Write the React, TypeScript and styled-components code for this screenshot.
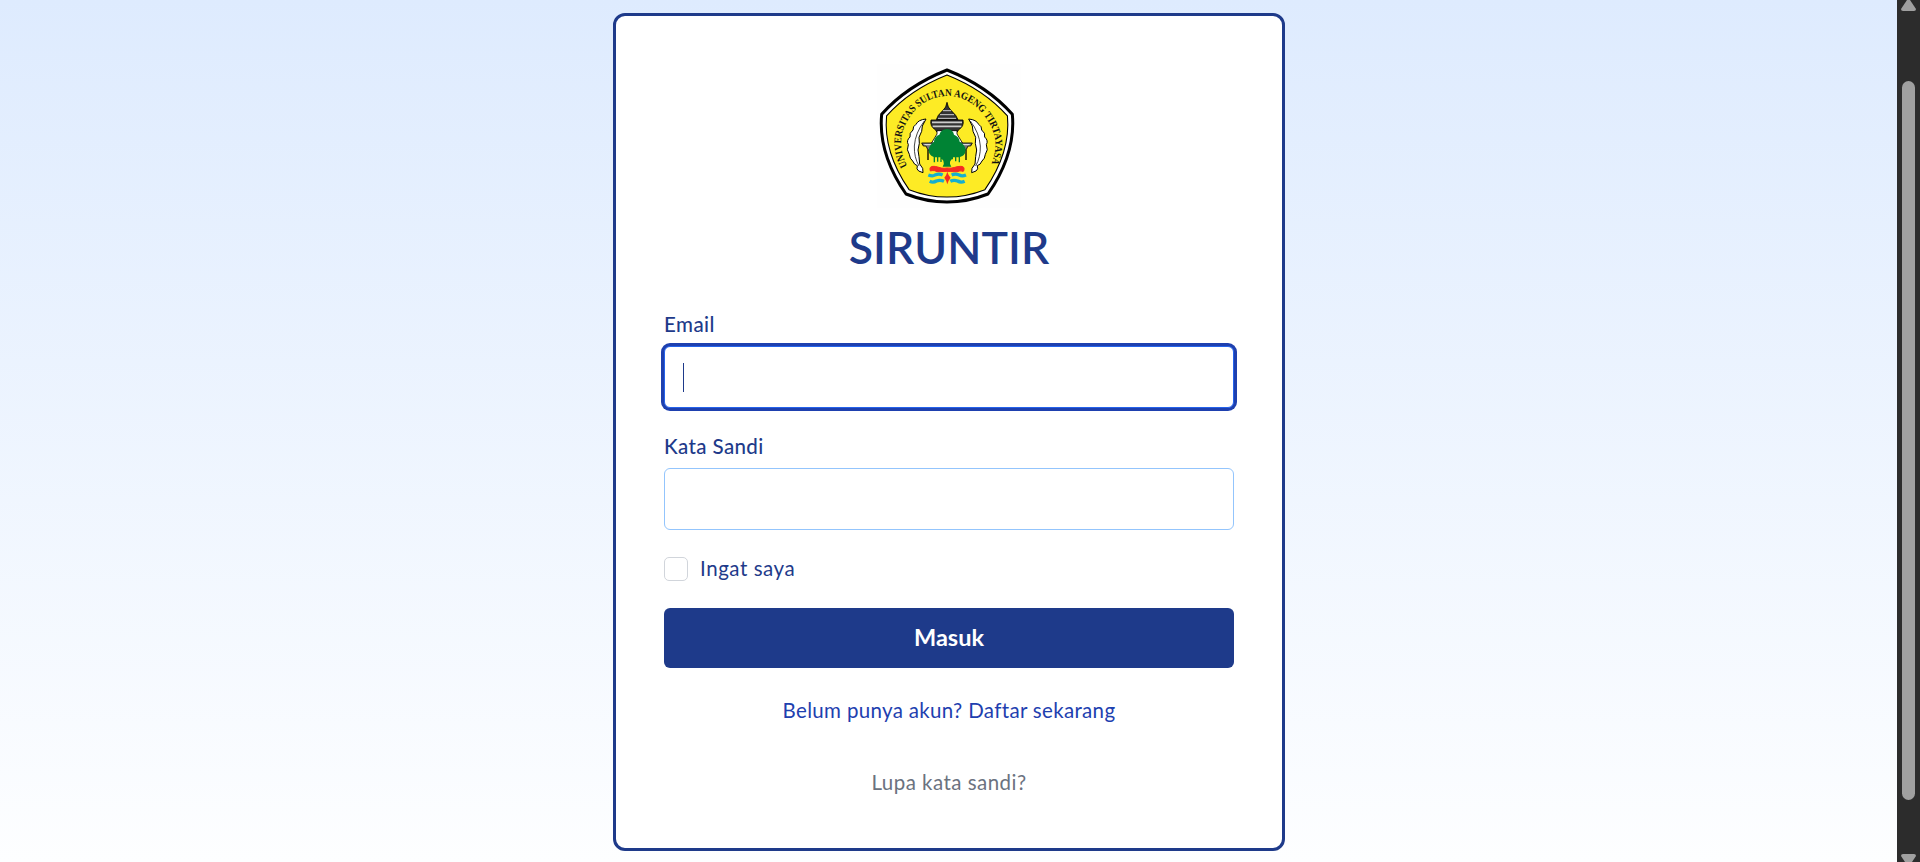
import React from 'react';
import styled, { createGlobalStyle } from 'styled-components';

const navy = '#1e3a8a';

const GlobalStyle = createGlobalStyle`
  *, *::before, *::after { box-sizing: border-box; }
  body { margin: 0; overflow: hidden; font-family: Lato, "Open Sans", sans-serif; }
`;

const Window = styled.div`
  display: flex;
  width: 100%;
  height: 862px;
  overflow: hidden;
`;

const Page = styled.main`
  flex: 1;
  display: flex;
  justify-content: center;
  align-items: flex-start;
  padding: 13px 0 0 1px;
  background: linear-gradient(to bottom, #deebfe, #fdfeff);
`;

const Card = styled.form`
  display: flex;
  flex-direction: column;
  width: 672px;
  height: 838px;
  padding: 48px;
  border: 3px solid ${navy};
  border-radius: 12px;
  background: #fff;

  > * { flex-shrink: 0; }
`;

const Emblem = styled.svg`
  display: block;
  width: 144px;
  height: 144px;
  margin-left: 213px;
`;

const Title = styled.h1`
  margin: 14px 0 0;
  height: 50px;
  line-height: 50px;
  text-align: center;
  font-size: 44.5px;
  font-weight: 600;
  letter-spacing: 0.1px;
  color: ${navy};
`;

const Field = styled.div<{ $top: number }>`
  display: flex;
  flex-direction: column;
  gap: 7px;
  margin-top: ${(p) => p.$top}px;
`;

const Label = styled.label<{ $weight?: number; $spacing?: number }>`
  height: 30px;
  line-height: 30px;
  font-size: 20.5px;
  font-weight: ${(p) => p.$weight ?? 500};
  letter-spacing: ${(p) => p.$spacing ?? 0.45}px;
  color: ${navy};
`;

const Input = styled.div<{ $focused?: boolean }>`
  display: flex;
  align-items: center;
  height: 62px;
  padding: 0 18px;
  border: 1px solid ${(p) => (p.$focused ? '#2563eb' : '#93c5fd')};
  border-radius: 6px;
  background: #fff;
  box-shadow: ${(p) => (p.$focused ? '0 0 0 3px #1e40af' : 'none')};
`;

const Caret = styled.span`
  width: 1px;
  height: 29px;
  background: ${navy};
`;

const Remember = styled.div`
  display: flex;
  align-items: center;
  gap: 12px;
  height: 24px;
  margin-top: 27px;

  label { padding-bottom: 2px; line-height: 28px; }
`;

const Checkbox = styled.span`
  width: 24px;
  height: 24px;
  border: 1px solid #d1d5db;
  border-radius: 5px;
  background: #fff;
`;

const Submit = styled.button`
  height: 60px;
  margin-top: 27px;
  padding: 0 0 2px;
  border: 0;
  border-radius: 6px;
  background: ${navy};
  color: #fff;
  font-family: inherit;
  font-size: 23.5px;
  font-weight: 700;
  line-height: 58px;
`;

const Link = styled.a<{ $top: number; $color: string; $spacing: number }>`
  align-self: center;
  height: 30px;
  margin-top: ${(p) => p.$top}px;
  line-height: 30px;
  font-size: 20.5px;
  letter-spacing: ${(p) => p.$spacing}px;
  white-space: nowrap;
  color: ${(p) => p.$color};
`;

const Scrollbar = styled.div`
  display: flex;
  flex-direction: column;
  align-items: center;
  width: 23px;
  background: #2c2c2c;
`;

const Arrow = styled.svg`
  display: block;
  width: 15px;
  flex: none;
`;

const Thumb = styled.div`
  width: 13px;
  height: 719px;
  margin: 70px 0 54px;
  flex: none;
  border-radius: 7px;
  background: #a0a0a0;
`;

const shield = 'M231 30 Q352 78 427 163 Q438 280 354 402 Q293 426 231 426 Q169 426 108 402 Q24 280 35 163 Q110 78 231 30Z';

function Feather() {
  return (
    <g fill="#fff" stroke="#000" strokeWidth="3" strokeLinejoin="round">
      <path d="M168 177 Q145 179 138 193 Q128 199 129 210 Q117 219 120 231 Q108 242 115 254 Q108 270 118 283 Q119 296 128 303 Q133 315 142 317 Q138 328 146 333 L159 338 L158 325 L149 312 L147 290 L144 270 L148 250 L147 232 L155 214 L157 198 Z" />
      <path d="M163 183 Q136 218 133 258 Q132 292 147 318" fill="none" strokeWidth="2.2" />
    </g>
  );
}

function Logo() {
  return (
    <Emblem viewBox="21 12 432 432" role="img" aria-label="Universitas Sultan Ageng Tirtayasa">
      <rect x="21" y="12" width="432" height="432" fill="#fefefe" />
      <path d={shield} fill="#fff" stroke="#000" strokeWidth="9" strokeLinejoin="round" />
      <path d={shield} transform="translate(231 228) scale(.925) translate(-231 -228)" fill="#fdeb25" stroke="#000" strokeWidth="3.5" />
      <defs>
        <path id="motto" d="M112 319 C84 262 90 222 112 182 C136 140 180 108 233 108 C286 108 326 140 350 178 C378 218 388 262 358 325 L352 338" />
      </defs>
      <text fontFamily="Liberation Serif, serif" fontWeight="700" fontSize="31" fill="#111">
        <textPath href="#motto" textLength="574" lengthAdjust="spacingAndGlyphs">UNIVERSITAS SULTAN AGENG TIRTAYASA</textPath>
      </text>
      <Feather />
      <g transform="translate(464 0) scale(-1 1)"><Feather /></g>
      <g stroke="#000" strokeWidth="2.5" strokeLinejoin="round">
        <path d="M231 127 L235 141 L243 151 L257 166 L264 179 H199 L205 166 L219 151 L227 141Z" fill="#333" />
        <path d="M219 152 H243 M210 164 H252 M204 175 H258" stroke="#ccc" strokeWidth="3" />
        <path d="M183 180 H279 Q283 199 266 209 L261 217 H201 L196 209 Q179 199 183 180Z" fill="#333" />
        <path d="M186 187 H276 M188 199 H274" stroke="#ccc" strokeWidth="5" />
        <path d="M201 212 H261 V222 L278 250 H184 L201 222Z" fill="#fff" />
        <path d="M155 249 H307 L302 258 H294 L288 270 H174 L168 258 H160Z" fill="#777" />
        <path d="M163 254 H299" stroke="#eee" strokeWidth="3" />
        <path d="M174 270 V300 M288 270 V300" fill="none" strokeWidth="4" />
      </g>
      <path fill="#008334" d="M231 207 Q250 209 252 224 Q268 230 269 245 Q286 255 287 270 Q286 287 270 291 V307 H266 V292 H259 V304 H255 V292 H249 V298 H245 L240 305 Q238 313 244 320 H218 Q224 312 220 302 L215 296 V306 H211 V292 H205 V305 H201 V292 H195 V307 H191 V291 Q175 284 176 269 Q178 254 192 246 Q193 229 208 224 Q213 208 231 207Z" />
      <path d="M181 333 Q176 318 192 319 C207 320 212 327 231 324 C250 327 256 319 271 319 Q286 318 281 333 C278 337 276 331 269 333 C258 338 248 334 231 334 C214 334 203 338 194 332 Q185 331 181 333Z" fill="#f62b22" stroke="#f62b22" strokeWidth="3" />
      <path d="M175 345 Q188 350 195 345 Q207 340 218 345 M179 364 Q190 369 199 363 Q211 359 222 364 M288 345 Q276 350 268 345 Q256 340 245 345 M284 364 Q272 369 263 363 Q251 359 241 364" fill="none" stroke="#16afd0" strokeWidth="10" />
      <path d="M232 335 Q235 347 242 353 Q235 361 232 373 Q229 361 223 353 Q229 347 232 335Z" fill="#f62b22" />
    </Emblem>
  );
}

export default function App() {
  return (
    <>
      <GlobalStyle />
      <Window>
        <Page>
          <Card>
            <Logo />
            <Title>SIRUNTIR</Title>
            <Field $top={37}>
              <Label>Email</Label>
              <Input $focused><Caret /></Input>
            </Field>
            <Field $top={23}>
              <Label $spacing={0.38}>Kata Sandi</Label>
              <Input />
            </Field>
            <Remember>
              <Checkbox />
              <Label $weight={400} $spacing={0.55}>Ingat saya</Label>
            </Remember>
            <Submit type="button">Masuk</Submit>
            <Link $top={27} $color="#1e40af" $spacing={0.33}>Belum punya akun? Daftar sekarang</Link>
            <Link $top={42} $color="#6b7280" $spacing={0.47}>Lupa kata sandi?</Link>
          </Card>
        </Page>
        <Scrollbar>
          <Arrow viewBox="0 0 15 11" height="11"><path d="M6 0 H9 L15 9 Q15 11 13 11 H2 Q0 11 0 9Z" fill="#a0a0a0" /></Arrow>
          <Thumb />
          <Arrow viewBox="0 0 15 8" height="8"><path d="M2 0 H13 Q15 0 15 2 L11 8 H4 L0 2 Q0 0 2 0Z" fill="#a0a0a0" /></Arrow>
        </Scrollbar>
      </Window>
    </>
  );
}
